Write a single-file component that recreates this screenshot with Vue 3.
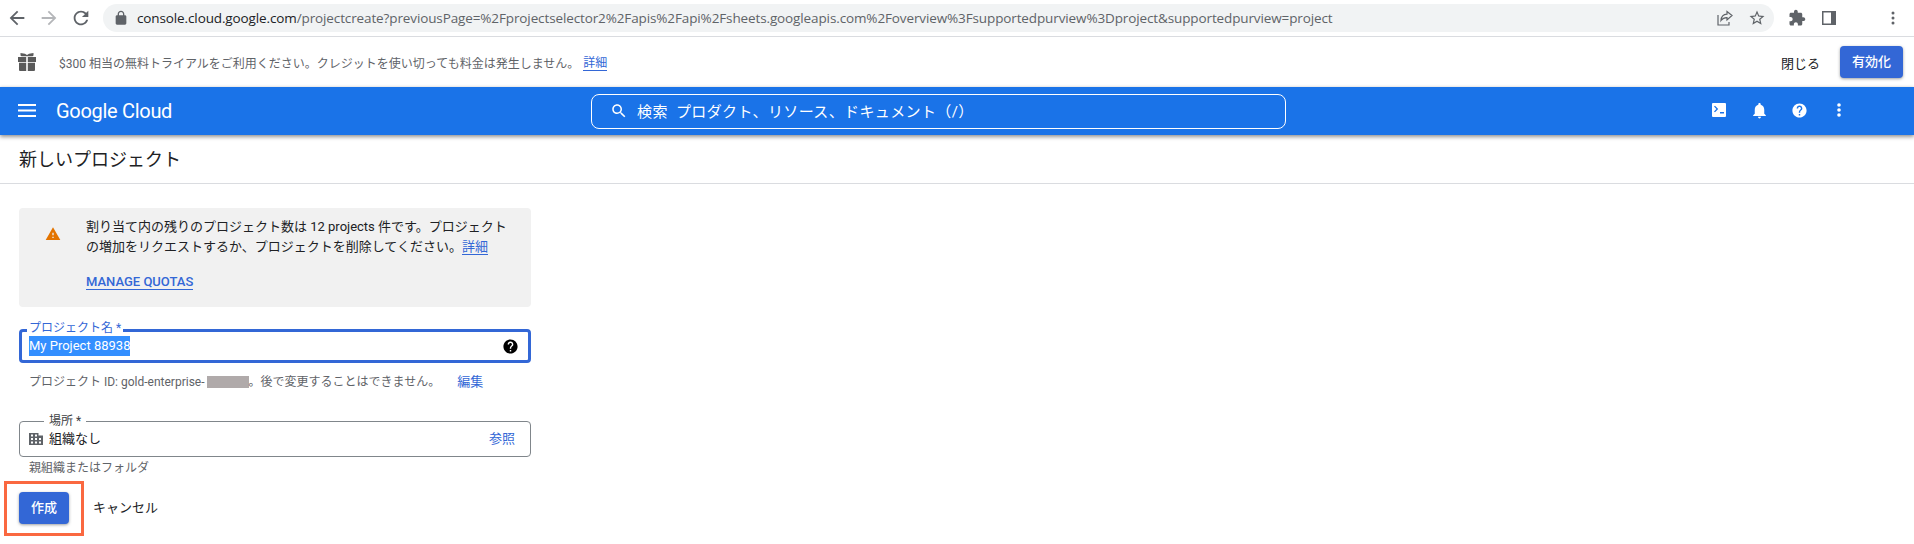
<script setup>
const host = 'console.cloud.google.com'
const path = '/projectcreate?previousPage=%2Fprojectselector2%2Fapis%2Fapi%2Fsheets.googleapis.com%2Foverview%3Fsupportedpurview%3Dproject&supportedpurview=project'
</script>

<template>
  <div class="page">
    <div class="chrome">
      <svg class="nav" viewBox="0 0 24 24" width="22" height="22"><path fill="#5f6368" d="M20 11H7.83l5.59-5.59L12 4l-8 8 8 8 1.41-1.41L7.83 13H20v-2z"/></svg>
      <svg class="nav" viewBox="0 0 24 24" width="22" height="22"><path fill="#b4b6b9" d="M12 4l-1.41 1.41L16.17 11H4v2h12.17l-5.58 5.59L12 20l8-8z"/></svg>
      <svg class="nav" viewBox="0 0 24 24" width="22" height="22"><path fill="#5f6368" d="M17.65 6.35C16.2 4.9 14.21 4 12 4c-4.42 0-7.99 3.58-7.99 8s3.57 8 7.99 8c3.73 0 6.84-2.55 7.73-6h-2.08c-.82 2.33-3.04 4-5.65 4-3.31 0-6-2.69-6-6s2.69-6 6-6c1.66 0 3.14.69 4.22 1.78L13 11h7V4l-2.35 2.35z"/></svg>
      <div class="omni">
        <svg viewBox="0 0 24 24" width="16" height="16"><path fill="#5f6368" d="M18 8h-1V6c0-2.76-2.24-5-5-5S7 3.24 7 6v2H6c-1.1 0-2 .9-2 2v10c0 1.1.9 2 2 2h12c1.1 0 2-.9 2-2V10c0-1.1-.9-2-2-2zM9 6c0-1.66 1.34-3 3-3s3 1.34 3 3v2H9V6z"/></svg>
        <span class="url"><span class="host">{{ host }}</span>{{ path }}</span>
        <svg class="share" viewBox="0 0 16 16" width="16" height="16"><path fill="none" stroke="#5f6368" stroke-width="1.2" d="M15 5.500 10 1.500v2.600C6 4.300 4.200 7 4 10.500 5.500 8.500 7.500 7.500 10 7.600v2.400L15 5.500z M1 5v10h11v-3"/></svg>
        <svg class="star" viewBox="0 0 24 24" width="18" height="18"><path fill="#5f6368" d="M22 9.24l-7.19-.62L12 2 9.19 8.63 2 9.24l5.46 4.73L5.82 21 12 17.27 18.18 21l-1.63-7.03L22 9.24zM12 15.4l-3.76 2.27 1-4.28-3.32-2.88 4.38-.38L12 6.1l1.71 4.04 4.38.38-3.32 2.88 1 4.28L12 15.4z"/></svg>
      </div>
      <svg class="ext" viewBox="0 0 24 24" width="18" height="18"><path fill="#5f6368" d="M20.5 11H19V7c0-1.1-.9-2-2-2h-4V3.500C13 2.120 11.880 1 10.500 1S8 2.120 8 3.500V5H4c-1.100 0-1.990.9-1.990 2v3.800H3.500c1.490 0 2.700 1.210 2.700 2.700s-1.210 2.700-2.700 2.700H2V20c0 1.100.9 2 2 2h3.800v-1.500c0-1.490 1.210-2.700 2.700-2.700 1.490 0 2.700 1.210 2.700 2.700V22H17c1.100 0 2-.9 2-2v-4h1.500c1.380 0 2.500-1.120 2.500-2.500S21.880 11 20.500 11z"/></svg>
      <svg class="side" viewBox="0 0 14 14" width="14" height="14"><path fill="#5f6368" fill-rule="evenodd" d="M0 0h14v14H0zM1.500 1.500v11H9v-11z"/></svg>
      <svg class="menu" viewBox="0 0 4 14" width="4" height="14"><g fill="#5f6368"><circle cx="2" cy="2" r="1.500"/><circle cx="2" cy="7" r="1.500"/><circle cx="2" cy="12" r="1.500"/></g></svg>
    </div>

    <div class="promo">
      <svg class="gift" viewBox="0 0 18 18" width="18" height="18"><path fill="#5a5a5a" d="M2.500 0 7 .8l2 1.200 2-1.200 4.500-.8v2.400l-1 .8H3.500l-1-.8zM0 4h8.200v5H0zM9.800 4H18v5H9.800zM1 9.800h7.200V18H2a1 1 0 0 1-1-1zM9.800 9.800H17V17a1 1 0 0 1-1 1H9.800z"/></svg>
      <span class="promo-text">$300 相当の無料トライアルをご利用ください。クレジットを使い切っても料金は発生しません。</span>
      <a class="link promo-link">詳細</a>
      <span class="grow"></span>
      <span class="close">閉じる</span>
      <button class="btn activate">有効化</button>
    </div>

    <header class="bar">
      <svg class="burger" viewBox="0 0 18 13" width="18" height="13"><path fill="#fff" d="M0 0h18v2H0zM0 5.500h18v2H0zM0 11h18v2H0z"/></svg>
      <span class="brand">Google Cloud</span>
      <div class="search">
        <svg viewBox="0 0 24 24" width="18" height="18"><path fill="#fff" d="M15.500 14h-.79l-.28-.27C15.410 12.590 16 11.110 16 9.500 16 5.910 13.090 3 9.500 3S3 5.910 3 9.500 5.910 16 9.500 16c1.610 0 3.090-.59 4.230-1.570l.27.28v.79l5 4.990L20.490 19l-4.990-5zm-6 0C7.010 14 5 11.990 5 9.500S7.010 5 9.500 5 14 7.010 14 9.500 11.990 14 9.500 14z"/></svg>
        <span class="search-text">検索&nbsp; プロダクト、リソース、ドキュメント（/）</span>
      </div>
      <div class="bar-icons">
        <span class="cell"><svg viewBox="0 0 14 14" width="14" height="14"><path fill="#fff" fill-rule="evenodd" d="M1 0h12a1 1 0 0 1 1 1v12a1 1 0 0 1-1 1H1a1 1 0 0 1-1-1V1a1 1 0 0 1 1-1zM2 3.600 3 2.800 6.200 6 3 9.200 2 8.400 4.400 6zM8 9h4v1.600H8z"/></svg></span>
        <span class="cell"><svg viewBox="0 0 24 24" width="19" height="19"><path fill="#fff" d="M12 22c1.100 0 2-.9 2-2h-4c0 1.100.89 2 2 2zm6-6v-5c0-3.070-1.640-5.640-4.500-6.320V4c0-.83-.67-1.500-1.500-1.500s-1.500.67-1.500 1.500v.68C7.630 5.360 6 7.920 6 11v5l-2 2v1h16v-1l-2-2z"/></svg></span>
        <span class="cell"><svg viewBox="0 0 24 24" width="17" height="17"><path fill="#fff" d="M12 2C6.480 2 2 6.480 2 12s4.480 10 10 10 10-4.480 10-10S17.520 2 12 2zm1 17h-2v-2h2v2zm2.070-7.750l-.9.920C13.450 12.900 13 13.500 13 15h-2v-.5c0-1.100.45-2.100 1.170-2.830l1.240-1.260c.37-.36.590-.86.590-1.410 0-1.100-.9-2-2-2s-2 .9-2 2H8c0-2.210 1.790-4 4-4s4 1.790 4 4c0 .88-.36 1.680-.93 2.250z"/></svg></span>
        <span class="cell"><svg viewBox="0 0 4 14" width="4" height="14"><g fill="#fff"><circle cx="2" cy="2" r="1.800"/><circle cx="2" cy="7" r="1.800"/><circle cx="2" cy="12" r="1.800"/></g></svg></span>
      </div>
    </header>

    <div class="title">新しいプロジェクト</div>

    <main class="form">
      <section class="notice">
        <svg class="warn" viewBox="0 0 24 24" width="16" height="16"><path fill="#e37400" d="M1 21h22L12 2 1 21zm12-3h-2v-2h2v2zm0-4h-2v-4h2v4z"/></svg>
        <div class="notice-body">
          <p>割り当て内の残りのプロジェクト数は 12 projects 件です。プロジェクトの増加をリクエストするか、プロジェクトを削除してください。<a class="link">詳細</a></p>
          <a class="link quotas">MANAGE QUOTAS</a>
        </div>
      </section>

      <div class="field active">
        <label>プロジェクト名 *</label>
        <span class="selected">My Project 88938</span>
        <svg viewBox="0 0 24 24" width="17" height="17"><path fill="#000" d="M12 2C6.480 2 2 6.480 2 12s4.480 10 10 10 10-4.480 10-10S17.520 2 12 2zm1 17h-2v-2h2v2zm2.070-7.750l-.9.920C13.450 12.900 13 13.500 13 15h-2v-.5c0-1.100.45-2.100 1.170-2.830l1.240-1.260c.37-.36.590-.86.590-1.410 0-1.100-.9-2-2-2s-2 .9-2 2H8c0-2.210 1.790-4 4-4s4 1.790 4 4c0 .88-.36 1.680-.93 2.250z"/></svg>
      </div>
      <div class="hint id-line">
        <span>プロジェクト ID: gold-enterprise-</span><span class="redact"></span><span>。後で変更することはできません。</span>
        <a class="edit">編集</a>
      </div>

      <div class="field place">
        <label>場所 *</label>
        <svg class="bldg" viewBox="0 0 14 12" width="14" height="12"><path fill="#5f6368" fill-rule="evenodd" d="M0 0h9.500v2.500H14V12H0zM2 1.500v2h2v-2zM6 1.500v2h2v-2zM2 5v2h2V5zM6 5v2h2V5zM10 5v2h2V5zM2 8.500v2h2v-2zM6 8.500v2h2v-2zM10 8.500v2h2v-2z"/></svg>
        <span class="place-text">組織なし</span>
        <a class="browse">参照</a>
      </div>
      <div class="hint parent">親組織またはフォルダ</div>

      <div class="actions">
        <div class="mark">
          <button class="btn create">作成</button>
          <div class="callout"></div>
        </div>
        <span class="cancel">キャンセル</span>
      </div>
    </main>
  </div>
</template>

<style>
html, body { margin: 0; background: #fff; }
</style>

<style scoped>
.page {
  width: 1914px; height: 544px; overflow: hidden; background: #fff; color: #202124;
  font-family: Roboto, "Noto Sans CJK JP", sans-serif;
}
.chrome {
  height: 37px; box-sizing: border-box; border-bottom: 1px solid #dadce0;
  display: flex; align-items: center; padding-left: 6px;
}
.nav { flex: none; margin-right: 10px; }
.nav:nth-of-type(3) { margin-right: 11px; }
.omni {
  width: 1671px; height: 28px; border-radius: 14px; background: #f1f3f4; flex: none;
  display: flex; align-items: center; padding: 0 8px 0 10px; box-sizing: border-box;
}
.url {
  margin-left: 8px; flex: 1; min-width: 0; white-space: nowrap; overflow: hidden;
  font: 13.5px "Open Sans", sans-serif; letter-spacing: -.12px; color: #5f6368;
}
.host { color: #202124; }
.star { margin-left: 15px; }
.ext { margin-left: 14px; }
.side { margin-left: 16px; }
.menu { margin-left: 55px; }

.promo { height: 50px; display: flex; align-items: center; padding: 0 11px 0 18px; font-size: 12px; }
.promo-text { margin-left: 23px; color: #5f6368; }
.promo-link { margin-left: 4px; }
.grow { flex: 1; }
.close { font-size: 13px; color: #202124; margin-right: 20px; }
.btn {
  border: 0; border-radius: 4px; background: #3367d6; color: #fff; padding: 0 0 3px;
  font: 500 13px Roboto, "Noto Sans CJK JP", sans-serif; box-shadow: 0 1px 3px rgba(60,64,67,.5);
}
.activate { width: 63px; height: 32px; }

.link { color: #3367d6; border-bottom: 1px solid #3367d6; }

.bar {
  height: 48px; background: #1a73e8; display: flex; align-items: center; position: relative;
  box-shadow: 0 2px 4px rgba(0,0,0,.4), 0 0 3px rgba(0,0,0,.1); padding-left: 18px;
}
.burger { margin-bottom: 2px; }
.brand { margin-left: 20px; width: 116px; flex: none; font-size: 20px; letter-spacing: -.3px; color: #fff; white-space: nowrap; }
.search {
  margin-left: 419px; width: 695px; height: 35px; box-sizing: border-box; flex: none;
  border: 1px solid #fff; border-radius: 8px; display: flex; align-items: center; padding-left: 18px;
}
.search-text { margin: 0 0 2px 9px; font-size: 15px; letter-spacing: .38px; color: #fff; }
.bar-icons { margin-left: 413px; display: flex; align-items: center; margin-bottom: 2px; }
.cell { width: 40px; display: flex; justify-content: center; align-items: center; }

.title {
  height: 49px; box-sizing: border-box; border-bottom: 1px solid #dadce0;
  display: flex; align-items: center; padding: 0 0 2px 19px; font-size: 18px;
}
.form { padding: 24px 0 0 19px; width: 512px; }

.notice { display: flex; height: 99px; background: #f1f1f1; border-radius: 4px; }
.warn { margin: 18px 25px 0 26px; flex: none; }
.notice-body { padding: 9px 14px 0 0; font-size: 13px; min-width: 0; flex: 1; }
.notice-body p { margin: 0; line-height: 20px; }
.quotas {
  display: inline-block; margin-top: 17px; font-size: 13px; font-weight: 500; line-height: 15px;
}

.field { position: relative; display: flex; align-items: center; box-sizing: border-box; border-radius: 4px; }
.field label { position: absolute; background: #fff; font-size: 12px; line-height: 14px; white-space: nowrap; }
.active { margin-top: 22px; height: 34px; border: 3px solid #3367d6; padding: 0 9px 0 7px; justify-content: space-between; }
.active label { left: 5px; top: -11px; padding: 0 2px; color: #3367d6; }
.selected { background: #338fff; color: #fff; font-size: 13px; line-height: 20px; white-space: nowrap; }

.hint { font-size: 12px; line-height: 16px; color: #5f6368; padding-left: 10px; }
.id-line { margin-top: 11px; display: flex; align-items: center; }
.redact { width: 42px; height: 12px; margin-left: 2px; background: #b0aaaa; }
.edit { margin-left: 17px; color: #3367d6; font-size: 13px; }

.place { margin-top: 31px; height: 36px; border: 1px solid #80868b; padding: 0 15px 0 9px; font-size: 13px; }
.place label { left: 24px; top: -8px; padding: 0 5px; color: #3c4043; }
.place-text { margin: 0 0 3px 6px; }
.browse { margin: 0 0 3px auto; color: #3367d6; }
.parent { margin-top: 3px; }

.actions { margin-top: 16px; display: flex; align-items: center; gap: 24px; }
.mark { position: relative; display: flex; }
.create { width: 50px; height: 32px; }
.callout {
  position: absolute; left: -15px; top: -11px; width: 80px; height: 55px; box-sizing: border-box;
  border: 3px solid #fa6840; pointer-events: none;
}
.cancel { font-size: 13px; margin-bottom: 3px; }
</style>
